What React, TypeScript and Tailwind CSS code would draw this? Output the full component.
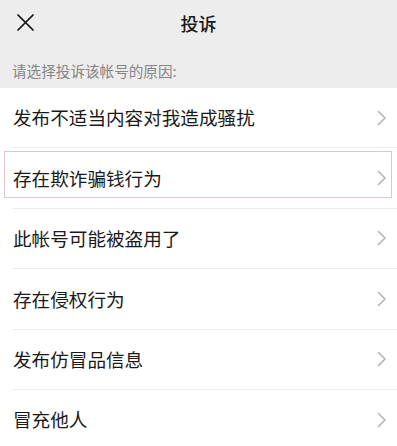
import React from "react";

const items = [
  "发布不适当内容对我造成骚扰",
  "存在欺诈骗钱行为",
  "此帐号可能被盗用了",
  "存在侵权行为",
  "发布仿冒品信息",
  "冒充他人",
];

function Chevron() {
  return (
    <svg width="12" height="16" viewBox="0 0 12 16" fill="none">
      <path d="M2.5 1.5 L9 8 L2.5 14.5" stroke="#b4b4b4" strokeWidth="1.6" strokeLinecap="round" strokeLinejoin="round" />
    </svg>
  );
}

export default function App() {
  return (
    <div
      className="w-[397px] h-[446px] overflow-hidden bg-white text-[#1a1a1a]"
      style={{ fontFamily: '"Noto Sans CJK SC", "Noto Sans", sans-serif' }}
    >
      <div className="bg-[#ededed]">
        <div className="relative h-[45px] flex items-center justify-center">
          <div className="absolute left-[16px] top-[13px]">
            <svg width="19" height="19" viewBox="0 0 19 19">
              <path d="M2 2 L17 17 M17 2 L2 17" stroke="#111" strokeWidth="1.7" strokeLinecap="round" />
            </svg>
          </div>
          <span className="text-[18px] leading-none font-medium">投诉</span>
        </div>
        <div className="h-[43px] pl-[12px] pt-[19px] text-[14.6px] leading-none text-[#858585]">
          请选择投诉该帐号的原因:
        </div>
      </div>
      <div>
        {items.map((t, i) => (
          <div key={t} className="relative h-[60.4px] pl-[13px]">
            {i === 1 && (
              <div className="absolute left-[4px] right-[5px] top-[3px] bottom-[11px] border border-[#dfc6cb]" />
            )}
            <div className="relative h-full flex items-center pr-[9px] border-b border-[#ececec]">
              <span className="flex-1 text-[18.6px] leading-none">{t}</span>
              <Chevron />
            </div>
          </div>
        ))}
      </div>
    </div>
  );
}
